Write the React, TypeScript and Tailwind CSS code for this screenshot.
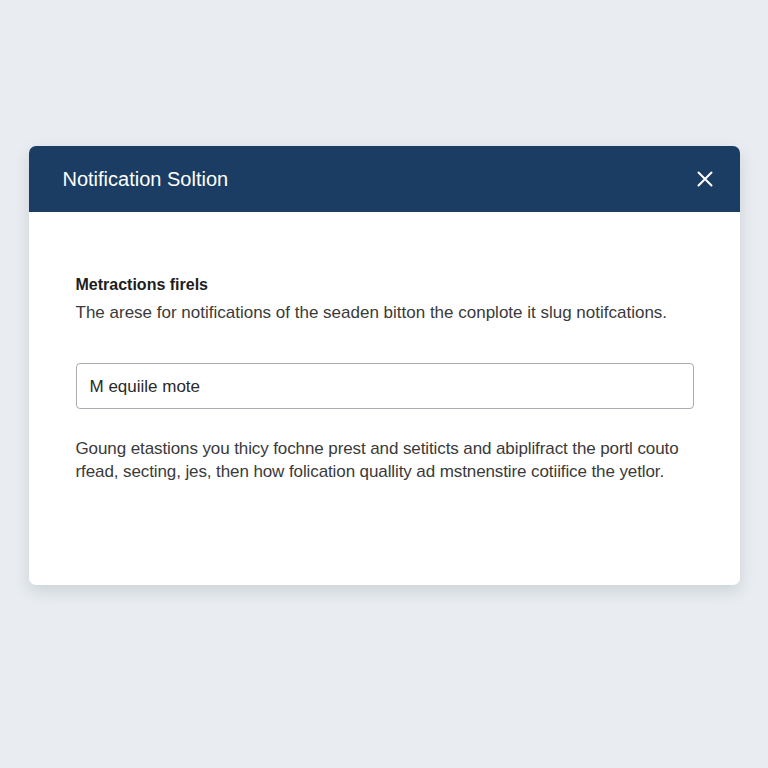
import React from "react";

export default function App() {
  return (
    <div
      className="w-[768px] h-[768px] bg-[#e9edf1] flex flex-col items-center"
      style={{ fontFamily: '"Liberation Sans", Arial, sans-serif' }}
    >
      <div className="mt-[146px] w-[711px] h-[439px] bg-white rounded-[7px] shadow-[0_6px_16px_rgba(30,45,60,0.14)] overflow-hidden flex flex-col">
        <div className="h-[66px] bg-[#1b3d63] flex items-center justify-between pl-[34px] pr-[26px]">
          <span className="text-white text-[20px]">Notification Soltion</span>
          <svg width="18" height="18" viewBox="0 0 18 18" fill="none" stroke="white" strokeWidth="2" strokeLinecap="round">
            <path d="M2.5 2.5L15.5 15.5M15.5 2.5L2.5 15.5" />
          </svg>
        </div>
        <div className="flex flex-col px-[47px] pt-[62px]">
          <div className="text-[16px] font-bold text-[#1d1d1d] leading-[22px]">Metractions firels</div>
          <p className="mt-[6px] text-[17px] text-[#3a3a3a] leading-[22px]">
            The arese for notifications of the seaden bitton the conplote it slug notifcations.
          </p>
          <div className="mt-[39px] h-[46px] w-[618px] border border-[#a9adb1] rounded-[4px] flex items-center px-[13px] pt-[2px] text-[17px] text-[#2a2a2a]">
            M equiile mote
          </div>
          <p className="mt-[28px] text-[17px] text-[#3a3a3a] leading-[23px] tracking-[-0.1px]">
            Goung etastions you thicy fochne prest and setiticts and abiplifract the portl couto
            <br />
            rfead, secting, jes, then how folication quallity ad mstnenstire cotiifice the yetlor.
          </p>
        </div>
      </div>
    </div>
  );
}
